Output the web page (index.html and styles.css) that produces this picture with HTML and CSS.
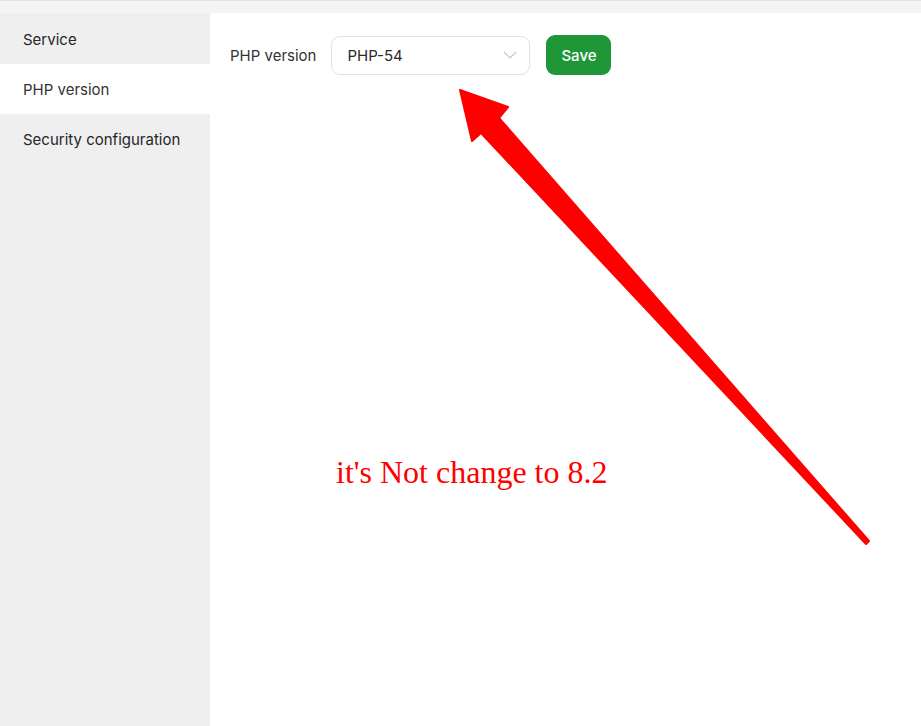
FILE: index.html
```html
<!DOCTYPE html>
<html>
<head>
<meta charset="utf-8">
<link rel="stylesheet" href="styles.css">
</head>
<body>
<div class="topbar"></div>
<div class="layout">
  <nav class="sidebar">
    <div class="nav-item">Service</div>
    <div class="nav-item active">PHP version</div>
    <div class="nav-item">Security configuration</div>
  </nav>
  <main class="main">
    <div class="form-row">
      <label class="label">PHP version</label>
      <div class="select">
        <span class="select-value">PHP-54</span>
        <svg class="chevron" width="14" height="8" viewBox="0 0 14 8"><path d="M1 1 L7 7 L13 1" fill="none" stroke="#c4c6cc" stroke-width="1.2"/></svg>
      </div>
      <button class="btn-save">Save</button>
    </div>
  </main>
</div>
<svg class="arrow" width="921" height="726" viewBox="0 0 921 726">
  <polygon points="460,90 508,107 499,118 869,541 866,544 481,133 472,141" fill="#ff0000" stroke="#ff0000" stroke-width="2" stroke-linejoin="round"/>
</svg>
<div class="note">it's Not change to 8.2</div>
</body>
</html>
```
FILE: styles.css
```css
html, body {
  margin: 0;
  padding: 0;
  height: 100%;
  background: #ffffff;
  font-family: Inter, "Noto Sans", sans-serif;
}
body {
  display: flex;
  flex-direction: column;
  overflow: hidden;
}
.topbar {
  height: 12px;
  background: #f3f5f5;
  border-top: 1px solid #e2e4e4;
  flex: none;
}
.layout {
  display: flex;
  flex: 1;
}
.sidebar {
  width: 210px;
  background: #efefef;
  flex: none;
  padding-top: 1px;
}
.nav-item {
  height: 50px;
  display: flex;
  align-items: center;
  padding-left: 23px;
  font-size: 15px;
  color: #262626;
}
.nav-item.active {
  background: #ffffff;
  color: #333333;
}
.main {
  flex: 1;
  padding: 22px 20px;
}
.form-row {
  display: flex;
  align-items: center;
}
.label {
  font-size: 15px;
  color: #333333;
  margin-right: 15px;
}
.select {
  width: 199px;
  height: 39px;
  box-sizing: border-box;
  border: 1px solid #e0e0e6;
  border-radius: 9px;
  display: flex;
  align-items: center;
  justify-content: space-between;
  padding: 0 12px 0 15px;
  margin-right: 16px;
}
.select-value {
  font-size: 15px;
  color: #2a2a2a;
}
.btn-save {
  height: 40px;
  width: 65px;
  border: none;
  border-radius: 9px;
  background: #1f9638;
  color: #ffffff;
  font-family: Inter, "Noto Sans", sans-serif;
  font-size: 15px;
  font-weight: 500;
  padding: 0;
}
.arrow {
  position: absolute;
  left: 0;
  top: 0;
  pointer-events: none;
}
.note {
  position: absolute;
  left: 336px;
  top: 454px;
  font-family: "Liberation Serif", serif;
  font-size: 32px;
  color: #ff0000;
  white-space: nowrap;
}
```
